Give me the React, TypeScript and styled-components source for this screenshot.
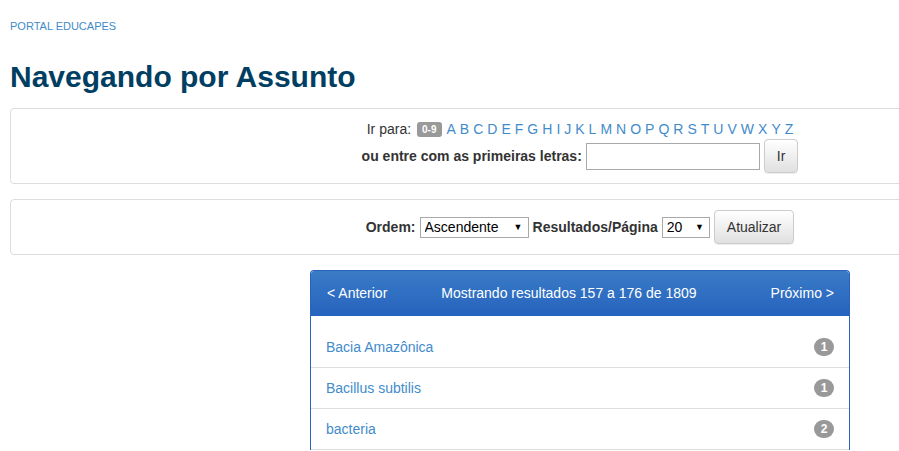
import React from 'react';
import styled, { createGlobalStyle } from 'styled-components';

const GlobalStyle = createGlobalStyle`
  html, body {
    margin: 0;
    padding: 0;
    overflow: hidden;
    background: #fff;
  }
  body {
    font-family: "Liberation Sans", Arial, sans-serif;
    font-size: 14px;
    line-height: 20px;
    color: #333;
  }
`;

const Page = styled.div`
  width: 1140px;
  padding: 0 10px;
`;

const Breadcrumb = styled.a`
  display: block;
  padding-top: 18px;
  font-size: 11px;
  line-height: 16px;
  color: #428bca;
  text-decoration: none;
  text-transform: uppercase;
`;

const Title = styled.h1`
  margin: 25px 0 13px;
  font-size: 30px;
  line-height: 36px;
  font-weight: 700;
  color: #003e62;
`;

const Panel = styled.div`
  border: 1px solid #ddd;
  border-radius: 4px;
  padding: 10px;
  margin-bottom: 15px;
  text-align: center;
`;

const Line = styled.div`
  display: flex;
  justify-content: center;
  align-items: center;
  gap: 4px;
  white-space: nowrap;
`;

const Label = styled.span<{ $bold?: boolean }>`
  font-weight: ${(p) => (p.$bold ? 700 : 400)};
`;

const Badge09 = styled.span`
  display: inline-block;
  background: #999;
  color: #fff;
  font-size: 10px;
  font-weight: 700;
  line-height: 15px;
  padding: 0 5px;
  border-radius: 3px;
  margin: 0 1px 0 2px;
`;

const Letters = styled.span`
  display: inline-flex;
  gap: 4px;
`;

const Letter = styled.a`
  color: #428bca;
  text-decoration: none;
`;

const TextInput = styled.input`
  width: 174px;
  height: 27px;
  box-sizing: border-box;
  border: 1px solid #a9a9a9;
  padding: 2px 4px;
  font: inherit;
`;

const Button = styled.button`
  height: 34px;
  padding: 6px 12px;
  font-family: inherit;
  font-size: 14px;
  color: #333;
  border: 1px solid #ccc;
  border-radius: 4px;
  background: linear-gradient(to bottom, #fff 0%, #e0e0e0 100%);
  box-shadow: inset 0 1px 0 rgba(255, 255, 255, 0.15), 0 1px 1px rgba(0, 0, 0, 0.075);
`;

const SelectWrap = styled.span`
  position: relative;
  display: inline-block;
`;

const Select = styled.select<{ $w: number }>`
  appearance: none;
  width: ${(p) => p.$w}px;
  height: 21px;
  border: 1px solid #a9a9a9;
  border-radius: 0;
  background: #fff;
  padding: 0 4px;
  font-family: inherit;
  font-size: 14px;
  color: #000;
`;

const Arrow = styled.span`
  position: absolute;
  right: 6px;
  top: 4px;
  font-size: 9px;
  line-height: 12px;
  color: #000;
  pointer-events: none;
`;

const Results = styled.div`
  width: 538px;
  margin: 0 auto;
  border: 1px solid #2a62bf;
  border-bottom: none;
  border-radius: 4px 4px 0 0;
`;

const ResultsHeader = styled.div`
  display: flex;
  align-items: center;
  padding: 12px 15px 13px 16px;
  color: #fff;
  background: linear-gradient(to bottom, #3a7bc6 0%, #2563be 100%);
  border-radius: 3px 3px 0 0;
`;

const NavLink = styled.a`
  color: #fff;
  text-decoration: none;
`;

const Showing = styled.span`
  flex: 1;
  text-align: center;
  padding-right: 20px;
`;

const List = styled.div`
  padding-top: 11px;
`;

const Row = styled.div`
  display: flex;
  justify-content: space-between;
  align-items: center;
  padding: 10px 15px;
  border-bottom: 1px solid #ddd;
`;

const RowLink = styled.a`
  color: #428bca;
  text-decoration: none;
`;

const Count = styled.span`
  min-width: 20px;
  height: 18px;
  box-sizing: border-box;
  border-radius: 10px;
  background: #999;
  color: #fff;
  font-size: 12px;
  font-weight: 700;
  line-height: 18px;
  text-align: center;
`;

const letters = 'ABCDEFGHIJKLMNOPQRSTUVWXYZ'.split('');

const rows = [
  { name: 'Bacia Amazônica', count: 1 },
  { name: 'Bacillus subtilis', count: 1 },
  { name: 'bacteria', count: 2 },
];

const App: React.FC = () => {
  return (
    <Page>
      <GlobalStyle />
      <Breadcrumb href="#">Portal eduCAPES</Breadcrumb>
      <Title>Navegando por Assunto</Title>

      <Panel>
        <Line>
          <Label>Ir para:</Label>
          <Badge09>0-9</Badge09>
          <Letters>
            {letters.map((l) => (
              <Letter key={l} href="#">{l}</Letter>
            ))}
          </Letters>
        </Line>
        <Line>
          <Label $bold>ou entre com as primeiras letras:</Label>
          <TextInput type="text" />
          <Button>Ir</Button>
        </Line>
      </Panel>

      <Panel>
        <Line>
          <Label $bold>Ordem:</Label>
          <SelectWrap>
            <Select $w={109} defaultValue="asc">
              <option value="asc">Ascendente</option>
              <option value="desc">Descendente</option>
            </Select>
            <Arrow>▼</Arrow>
          </SelectWrap>
          <Label $bold>Resultados/Página</Label>
          <SelectWrap>
            <Select $w={48} defaultValue="20">
              <option value="20">20</option>
              <option value="40">40</option>
            </Select>
            <Arrow>▼</Arrow>
          </SelectWrap>
          <Button>Atualizar</Button>
        </Line>
      </Panel>

      <Results>
        <ResultsHeader>
          <NavLink href="#">&lt; Anterior</NavLink>
          <Showing>Mostrando resultados 157 a 176 de 1809</Showing>
          <NavLink href="#">Próximo &gt;</NavLink>
        </ResultsHeader>
        <List>
          {rows.map((r) => (
            <Row key={r.name}>
              <RowLink href="#">{r.name}</RowLink>
              <Count>{r.count}</Count>
            </Row>
          ))}
        </List>
      </Results>
    </Page>
  );
};

export default App;
